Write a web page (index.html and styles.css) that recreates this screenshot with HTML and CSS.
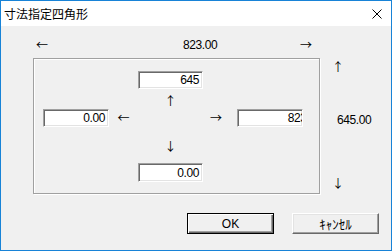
FILE: index.html
```html
<!DOCTYPE html>
<html lang="ja">

<head>
    <meta charset="UTF-8">
    <title>寸法指定四角形</title>
    <link rel="stylesheet" href="styles.css">
</head>

<body>
    <div class="window">
        <div class="titlebar">
            <span class="title">寸法指定四角形</span>
            <svg class="close" width="10" height="10" viewBox="0 0 10 10">
                <path d="M0.5 0.5 L9.5 9.5 M9.5 0.5 L0.5 9.5" stroke="#000" stroke-width="1" fill="none" />
            </svg>
        </div>

        <div class="client">
            <!-- 幅 -->
            <div class="width-row">
                <span class="arrow">←</span>
                <span class="num width-val">823.00</span>
                <span class="arrow right">→</span>
            </div>

            <div class="main">
                <div class="group">
                    <div class="field top"><span>645</span></div>
                    <span class="arrow up">↑</span>
                    <div class="field left"><span>0.00</span></div>
                    <span class="arrow to-left">←</span>
                    <span class="arrow to-right">→</span>
                    <div class="field right"><span class="clip">823.00</span></div>
                    <span class="arrow down">↓</span>
                    <div class="field bottom"><span>0.00</span></div>
                </div>

                <!-- 高さ -->
                <div class="side">
                    <span class="arrow">↑</span>
                    <span class="num height-val">645.00</span>
                    <span class="arrow end">↓</span>
                </div>
            </div>

            <div class="buttons">
                <button class="btn default">OK</button>
                <button class="btn kana">ｷｬﾝｾﾙ</button>
            </div>
        </div>
    </div>
</body>

</html>
```

FILE: styles.css
```css
* {
    margin: 0;
    padding: 0;
    box-sizing: border-box;
}

body {
    font-family: "Liberation Sans", "Noto Sans CJK JP", sans-serif;
    font-size: 12px;
    color: #000;
    background: #fff;
}

.window {
    width: 392px;
    height: 251px;
    border: 1px solid #1883d7;
    background: #f0f0f0;
    display: flex;
    flex-direction: column;
}

.titlebar {
    height: 25px;
    background: #fff;
    display: flex;
    align-items: center;
    justify-content: space-between;
    padding: 0 9px 0 3px;
}

.title {
    font-family: "Noto Sans CJK JP", sans-serif;
    font-size: 12px;
    line-height: 14px;
}

.close {
    display: block;
    margin-top: 1px;
}

.client {
    flex: 1;
}

.arrow {
    font-family: "Noto Sans CJK JP", sans-serif;
    font-size: 12px;
    line-height: 14px;
    width: 12px;
    text-align: center;
}

.num {
    line-height: 14px;
    letter-spacing: -0.4px;
}

.width-row {
    display: flex;
    margin: 12px 0 0 35px;
    width: 276px;
    height: 14px;
}

.width-val {
    margin-left: 135px;
}

.width-row .right {
    margin-left: auto;
}

.main {
    display: flex;
    margin: 6px 0 0 32px;
}

.group {
    width: 287px;
    height: 136px;
    border: 1px solid #a0a0a0;
    box-shadow: inset 1px 1px #fff, 1px 1px #fff;
    display: grid;
    grid-template-columns: 66px 29px 65px 34px 66px;
    grid-template-rows: 18px 20px 18px 36px 19px;
    padding: 12px 0 0 9px;
}

.field {
    background: #fff;
    border: 1px solid;
    border-color: #a0a0a0 #fff #fff #a0a0a0;
    box-shadow: inset 1px 1px #696969, inset -1px -1px #e3e3e3;
    display: flex;
    align-items: center;
    justify-content: flex-end;
    padding-right: 3px;
    overflow: hidden;
    line-height: 14px;
    letter-spacing: -0.4px;
    white-space: nowrap;
}

.field.top {
    grid-column: 3;
    grid-row: 1;
}

.up {
    grid-column: 3;
    grid-row: 2;
    justify-self: center;
    align-self: center;
    margin-top: 3px;
}

.field.left {
    grid-column: 1;
    grid-row: 3;
}

.to-left {
    grid-column: 2;
    grid-row: 3;
    justify-self: center;
    align-self: center;
}

.to-right {
    grid-column: 4;
    grid-row: 3;
    justify-self: start;
    align-self: center;
    margin-left: 7px;
}

.field.right {
    grid-column: 5;
    grid-row: 3;
}

/* 入りきらない値は右端で切れる */
.field .clip {
    margin-right: -23px;
}

.down {
    grid-column: 3;
    grid-row: 4;
    justify-self: center;
    align-self: center;
    margin-top: 2px;
}

.field.bottom {
    grid-column: 3;
    grid-row: 5;
}

.side {
    display: flex;
    flex-direction: column;
    margin-left: 12px;
    padding: 2px 0 4px;
}

.height-val {
    margin: 39px 0 0 5px;
}

.side .end {
    margin-top: auto;
}

.buttons {
    display: flex;
    gap: 18px;
    margin: 19px 0 0 186px;
}

.btn {
    width: 87px;
    height: 21px;
    font-family: "Liberation Sans", "Noto Sans CJK JP", sans-serif;
    font-size: 12px;
    background: #f0f0f0;
    border: 1px solid;
    border-color: #fff #696969 #696969 #fff;
    box-shadow: inset -1px -1px #a0a0a0, inset 1px 1px #e3e3e3;
    color: #000;
}

.btn.kana {
    font-family: "Noto Sans CJK JP", sans-serif;
    font-size: 13px;
}

.btn.default {
    border: 1px solid #000;
    box-shadow: inset 1px 1px #fff, inset -1px -1px #696969, inset -2px -2px #a0a0a0;
}
```
